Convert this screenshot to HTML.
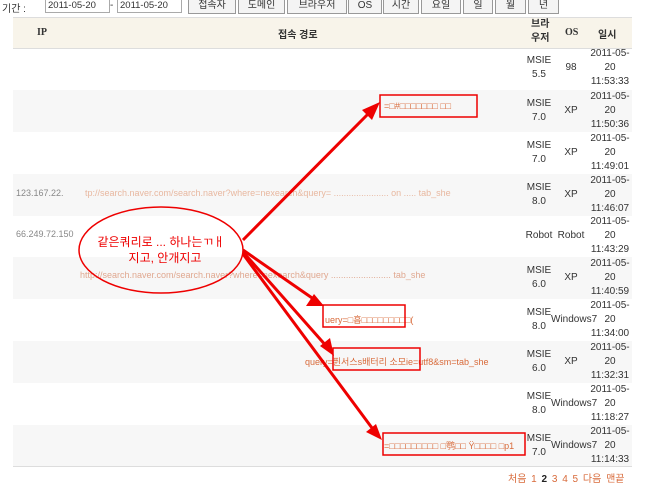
<html><head><style>
body{margin:0;width:650px;height:484px;background:#fff;font-family:"Liberation Sans","Noto Sans CJK KR",sans-serif;font-size:10px;color:#333;position:relative;overflow:hidden}
.a{position:absolute}
.btn{position:absolute;top:-1px;height:13px;border:1px solid #999;background:#f4f4f4;font-size:10px;text-align:center;line-height:11px;color:#333}
.in{position:absolute;top:-1px;height:12px;border:1px solid #aaa;background:#fff;font-size:9.5px;line-height:12px;padding-left:2px}
.row{position:absolute;left:13px;width:619px;height:42px}
.c{position:absolute;text-align:center;font-size:10px;line-height:14px}
.u{position:absolute;color:#d86a3a;font-size:9px;white-space:nowrap}
</style></head><body>
<div class="a" style="left:2px;top:0;font-size:10px">기간 :</div>
<div class="in" style="left:45px;width:61px">2011-05-20</div>
<div class="a" style="left:110px;top:0">-</div>
<div class="in" style="left:117px;width:61px">2011-05-20</div>
<div class="btn" style="left:188px;width:46px">접속자</div>
<div class="btn" style="left:238px;width:45px">도메인</div>
<div class="btn" style="left:287px;width:58px">브라우저</div>
<div class="btn" style="left:348px;width:32px">OS</div>
<div class="btn" style="left:383px;width:34px">시간</div>
<div class="btn" style="left:421px;width:38px">요일</div>
<div class="btn" style="left:463px;width:28px">일</div>
<div class="btn" style="left:495px;width:29px">월</div>
<div class="btn" style="left:528px;width:29px">년</div>
<div class="a" style="left:13px;top:17px;width:619px;height:30px;background:#f8f4ea;border-top:1px solid #ddd;border-bottom:1px solid #ddd"></div>
<div class="a" style="left:37px;top:27px;font-weight:bold;font-family:'Liberation Serif',serif">IP</div>
<div class="a" style="left:278px;top:26px;font-weight:bold">접속 경로</div>
<div class="a" style="left:531px;top:18px;font-weight:bold;line-height:14px">브라<br>우저</div>
<div class="a" style="left:565px;top:27px;font-weight:bold;font-family:'Liberation Serif',serif">OS</div>
<div class="a" style="left:598px;top:26px;font-weight:bold">일시</div>

<div class="row" style="top:47px"></div>
<div class="row" style="top:90px;background:#f7f7f7"></div>
<div class="row" style="top:132px"></div>
<div class="row" style="top:174px;background:#f7f7f7"></div>
<div class="row" style="top:215px"></div>
<div class="row" style="top:257px;background:#f7f7f7"></div>
<div class="row" style="top:299px"></div>
<div class="row" style="top:341px;background:#f7f7f7"></div>
<div class="row" style="top:383px"></div>
<div class="row" style="top:425px;background:#f7f7f7"></div>
<div class="a" style="left:13px;top:466px;width:619px;border-top:1px solid #ddd"></div>

<div class="c" style="left:524px;top:54px;width:30px">MSIE<br>5.5</div><div class="c" style="left:555px;top:61px;width:32px">98</div><div class="c" style="left:588px;top:47px;width:44px">2011-05-<br>20<br>11:53:33</div>
<div class="c" style="left:524px;top:97px;width:30px">MSIE<br>7.0</div><div class="c" style="left:555px;top:104px;width:32px">XP</div><div class="c" style="left:588px;top:90px;width:44px">2011-05-<br>20<br>11:50:36</div>
<div class="c" style="left:524px;top:139px;width:30px">MSIE<br>7.0</div><div class="c" style="left:555px;top:146px;width:32px">XP</div><div class="c" style="left:588px;top:132px;width:44px">2011-05-<br>20<br>11:49:01</div>
<div class="c" style="left:524px;top:181px;width:30px">MSIE<br>8.0</div><div class="c" style="left:555px;top:188px;width:32px">XP</div><div class="c" style="left:588px;top:174px;width:44px">2011-05-<br>20<br>11:46:07</div>
<div class="c" style="left:524px;top:229px;width:30px">Robot</div><div class="c" style="left:555px;top:229px;width:32px">Robot</div><div class="c" style="left:588px;top:215px;width:44px">2011-05-<br>20<br>11:43:29</div>
<div class="c" style="left:524px;top:264px;width:30px">MSIE<br>6.0</div><div class="c" style="left:555px;top:271px;width:32px">XP</div><div class="c" style="left:588px;top:257px;width:44px">2011-05-<br>20<br>11:40:59</div>
<div class="c" style="left:524px;top:306px;width:30px">MSIE<br>8.0</div><div class="c" style="left:551px;top:313px;width:40px">Windows7</div><div class="c" style="left:588px;top:299px;width:44px">2011-05-<br>20<br>11:34:00</div>
<div class="c" style="left:524px;top:348px;width:30px">MSIE<br>6.0</div><div class="c" style="left:555px;top:355px;width:32px">XP</div><div class="c" style="left:588px;top:341px;width:44px">2011-05-<br>20<br>11:32:31</div>
<div class="c" style="left:524px;top:390px;width:30px">MSIE<br>8.0</div><div class="c" style="left:551px;top:397px;width:40px">Windows7</div><div class="c" style="left:588px;top:383px;width:44px">2011-05-<br>20<br>11:18:27</div>
<div class="c" style="left:524px;top:432px;width:30px">MSIE<br>7.0</div><div class="c" style="left:551px;top:439px;width:40px">Windows7</div><div class="c" style="left:588px;top:425px;width:44px">2011-05-<br>20<br>11:14:33</div>

<div class="u" style="left:85px;top:188px;color:#e8b8a0">tp://search.naver.com/search.naver?where=nexearch&amp;query= ...................... on ..... tab_she</div>
<div class="u" style="left:80px;top:270px;color:#e0a890">http://search.naver.com/search.naver?where=nexearch&amp;query ........................ tab_she</div>
<div class="u" style="left:305px;top:355px">query=퓐서스s배터리 소모ie=utf8&amp;sm=tab_she</div>
<div class="u" style="left:325px;top:313px">uery=□흡□□□□□□□□□(</div>
<div class="u" style="left:384px;top:101px">=□#□□□□□□□ □□</div>
<div class="u" style="left:384px;top:439px">=□□□□□□□□□ □鹗□□ Ÿ□□□□ □p1</div>
<div class="a" style="left:16px;top:188px;color:#888;font-size:9px">123.167.22.</div>
<div class="a" style="left:16px;top:229px;color:#888;font-size:9px">66.249.72.150</div>

<svg class="a" style="left:0;top:0" width="650" height="484">
<g stroke="#e00" fill="none" stroke-width="1.5">
<rect x="380" y="95" width="97" height="22"/>
<rect x="323" y="305" width="82" height="22"/>
<rect x="333" y="348" width="87" height="22"/>
<rect x="383" y="433" width="142" height="22"/>
<ellipse cx="161" cy="250" rx="82" ry="43"/>
</g>
<g stroke="#e00" stroke-width="3" fill="none">
<path d="M243 240 L370 112"/>
<path d="M243 250 L315 300"/>
<path d="M243 252 L328 348"/>
<path d="M243 254 L375 432"/>
</g>
<g fill="#e00">
<polygon points="380,102 362,110 372,120"/>
<polygon points="324,306 306,306 314,294"/>
<polygon points="334,356 320,346 330,338"/>
<polygon points="382,440 366,432 376,424"/>
</g>
<text x="161" y="246" fill="#e00" font-size="12" text-anchor="middle" font-family="Liberation Sans,Noto Sans CJK KR,sans-serif">같은쿼리로 ... 하나는ㄲㅐ</text>
<text x="165" y="262" fill="#e00" font-size="12" text-anchor="middle" font-family="Liberation Sans,Noto Sans CJK KR,sans-serif">지고, 안개지고</text>
</svg>

<div class="a" style="left:508px;top:470px;color:#d86a3a;font-size:10px;word-spacing:2px">처음 1 <b style="color:#222">2</b> 3 4 5 다음 맨끝</div>
</body></html>
